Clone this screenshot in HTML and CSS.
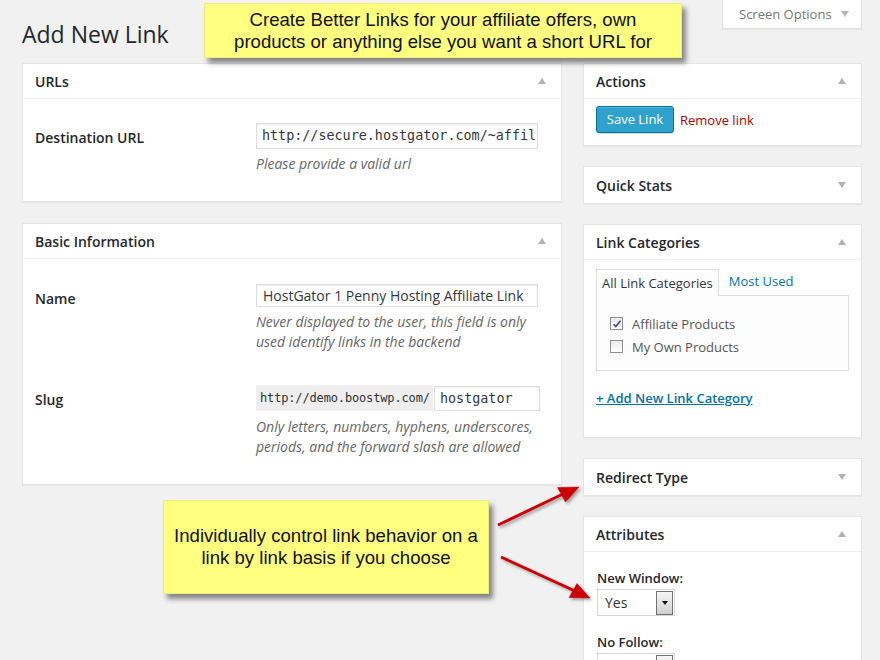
FILE: index.html
```html
<!DOCTYPE html>
<html lang="en">
<head>
<meta charset="utf-8">
<title>Add New Link</title>
<link rel="stylesheet" href="styles.css">
</head>
<body>
<div class="wrap">
  <header class="page-head">
    <h1 class="page-title">Add New Link</h1>
    <div class="screen-options">Screen Options <span class="tri tri-down"></span></div>
  </header>

  <div class="columns">
    <div class="main-col">
      <section class="postbox box-urls">
        <h3 class="hndle">URLs <span class="tri tri-up"></span></h3>
        <div class="inside inside-urls">
          <div class="field-row">
            <label class="field-label">Destination URL</label>
            <div class="field">
              <div class="text-input mono-input h26">http://secure.hostgator.com/~affil</div>
              <p class="description url-desc">Please provide a valid url</p>
            </div>
          </div>
        </div>
      </section>

      <section class="postbox box-basic">
        <h3 class="hndle">Basic Information <span class="tri tri-up"></span></h3>
        <div class="inside inside-basic">
          <div class="field-row">
            <label class="field-label">Name</label>
            <div class="field">
              <div class="text-input name-input h23">HostGator 1 Penny Hosting Affiliate Link</div>
              <p class="description name-desc">Never displayed to the user, this field is only used identify links in the backend</p>
            </div>
          </div>
          <div class="field-row slug-row">
            <label class="field-label">Slug</label>
            <div class="field">
              <div class="slug-line">
                <span class="slug-prefix">http://demo.boostwp.com/</span>
                <span class="text-input slug-input">hostgator</span>
              </div>
              <p class="description slug-desc">Only letters, numbers, hyphens, underscores, periods, and the forward slash are allowed</p>
            </div>
          </div>
        </div>
      </section>
    </div>

    <div class="side-col">
      <section class="postbox">
        <h3 class="hndle">Actions <span class="tri tri-up"></span></h3>
        <div class="inside inside-actions">
          <span class="button-primary">Save Link</span>
          <a class="remove-link">Remove link</a>
        </div>
      </section>

      <section class="postbox closed">
        <h3 class="hndle">Quick Stats <span class="tri tri-down"></span></h3>
      </section>

      <section class="postbox">
        <h3 class="hndle">Link Categories <span class="tri tri-up"></span></h3>
        <div class="inside inside-cats">
          <div class="tabs">
            <span class="tab active">All Link Categories</span>
            <span class="tab">Most Used</span>
          </div>
          <div class="tab-panel">
            <div class="cat-item"><span class="checkbox checked"><svg viewBox="0 0 12 12" width="12" height="12"><path d="M2.5 6.2 L4.8 8.6 L9.5 2.8" fill="none" stroke="#3b4a9a" stroke-width="1.6"/></svg></span>Affiliate Products</div>
            <div class="cat-item"><span class="checkbox"></span>My Own Products</div>
          </div>
          <a class="add-cat">+ Add New Link Category</a>
        </div>
      </section>

      <section class="postbox closed">
        <h3 class="hndle">Redirect Type <span class="tri tri-down"></span></h3>
      </section>

      <section class="postbox">
        <h3 class="hndle">Attributes <span class="tri tri-up"></span></h3>
        <div class="inside inside-attrs">
          <div class="attr-label">New Window:</div>
          <div class="fake-select"><span class="sel-text">Yes</span><span class="sel-btn"><span class="sel-tri"></span></span></div>
          <div class="attr-label attr-gap">No Follow:</div>
          <div class="fake-select"><span class="sel-text"></span><span class="sel-btn"><span class="sel-tri"></span></span></div>
        </div>
      </section>
    </div>
  </div>
</div>

<div class="callout callout-top">Create Better Links for your affiliate offers, own<br>products or anything else you want a short URL for</div>
<div class="callout callout-mid">Individually control link behavior on a<br>link by link basis if you choose</div>

<svg class="arrows" width="880" height="660" viewBox="0 0 880 660">
  <g fill="#cc0000" stroke="#cc0000">
    <line x1="498" y1="525" x2="565" y2="493" stroke-width="3"/>
    <polygon points="579,487 565.5,502 557.5,487.5" stroke-width="0.5"/>
    <line x1="501" y1="557" x2="575" y2="591" stroke-width="3"/>
    <polygon points="590,598 569,597.5 577,583.5" stroke-width="0.5"/>
  </g>
</svg>
</body>
</html>
```

FILE: styles.css
```css
* { box-sizing: border-box; }

html, body {
  margin: 0;
  padding: 0;
}

body {
  width: 880px;
  height: 660px;
  overflow: hidden;
  background: #f1f1f1;
  font-family: "Open Sans", "Liberation Sans", sans-serif;
  font-size: 13px;
  color: #444;
  position: relative;
}

.wrap {
  padding: 0 18px 0 22px;
}

.page-head {
  height: 63px;
  display: flex;
  justify-content: space-between;
  align-items: flex-start;
}

.page-title {
  margin: 0;
  padding-top: 20px;
  font-size: 23px;
  line-height: 29px;
  font-weight: 400;
  color: #23282d;
}

.screen-options {
  width: 140px;
  height: 29px;
  background: #fff;
  border: 1px solid #e1e1e1;
  border-top: none;
  box-shadow: 0 1px 1px rgba(0,0,0,.04);
  display: flex;
  align-items: center;
  padding-left: 16px;
  color: #72777c;
  font-size: 13px;
}

.screen-options .tri-down {
  margin-left: 9px;
  border-top-color: #b4b9be;
}

.tri {
  display: inline-block;
  width: 0;
  height: 0;
  border-left: 4.5px solid transparent;
  border-right: 4.5px solid transparent;
}

.tri-up { border-bottom: 6px solid #b0b3b6; }
.tri-down { border-top: 6px solid #b0b3b6; }

.columns {
  display: grid;
  grid-template-columns: 540px 279px;
  column-gap: 21px;
  align-items: start;
}

.postbox {
  background: #fff;
  border: 1px solid #e5e5e5;
  box-shadow: 0 1px 1px rgba(0,0,0,.04);
  margin-bottom: 20px;
}

.main-col .postbox { margin-bottom: 21px; }

.hndle {
  margin: 0;
  height: 35px;
  border-bottom: 1px solid #eee;
  display: flex;
  align-items: center;
  justify-content: space-between;
  padding: 0 15px 0 12px;
  font-size: 14px;
  font-weight: 600;
  color: #23282d;
}

.postbox.closed .hndle {
  border-bottom: none;
  height: 36px;
}

.inside {
  padding: 0 12px;
}

.inside-urls {
  padding-top: 24px;
  padding-bottom: 27px;
}

.inside-basic {
  padding-top: 25px;
  padding-bottom: 27px;
}

.field-row {
  display: grid;
  grid-template-columns: 221px 1fr;
}

.slug-row { margin-top: 33px; }

.field-label {
  padding-top: 5px;
  line-height: 20px;
  font-size: 14px;
  font-weight: 600;
  color: #23282d;
}

.text-input {
  display: block;
  width: 282px;
  background: #fff;
  border: 1px solid #ddd;
  box-shadow: inset 0 1px 2px rgba(0,0,0,.07);
  color: #32373c;
  white-space: nowrap;
  overflow: hidden;
}

.h26 { height: 26px; line-height: 24px; }
.h23 { height: 23px; line-height: 21px; }

.mono-input {
  font-family: "DejaVu Sans Mono", "Liberation Mono", monospace;
  font-size: 13.4px;
  padding-left: 5px;
}

.name-input {
  font-size: 14px;
  padding-left: 6px;
}

.description {
  margin: 4px 0 0;
  font-size: 14px;
  line-height: 20px;
  font-style: italic;
  color: #666;
  width: 284px;
}

.url-desc { margin-top: 5px; }

.name-desc { margin-top: 5px; }

.slug-desc { margin-top: 6px; width: 292px; }

.slug-line {
  display: flex;
  align-items: flex-start;
}

.slug-prefix {
  display: block;
  height: 26px;
  line-height: 27px;
  width: 177px;
  background: #eee;
  color: #333;
  font-family: "DejaVu Sans Mono", "Liberation Mono", monospace;
  font-size: 12px;
  padding-left: 4px;
  letter-spacing: -0.15px;
}

.slug-input {
  width: 106px;
  height: 25px;
  line-height: 23px;
  margin-left: 1px;
  margin-top: 1px;
  font-family: "DejaVu Sans Mono", "Liberation Mono", monospace;
  font-size: 13.4px;
  padding-left: 5px;
}

.inside-actions {
  padding: 7px 12px 12px;
  display: flex;
  align-items: center;
}

.button-primary {
  display: inline-block;
  width: 78px;
  height: 27px;
  line-height: 25px;
  text-align: center;
  background: #2ea2cc;
  border: 1px solid #0074a2;
  border-radius: 3px;
  box-shadow: inset 0 1px 0 rgba(120,200,230,.5), 0 1px 0 rgba(0,0,0,.15);
  color: #fff;
  font-size: 13px;
}

.remove-link {
  margin-left: 6px;
  color: #a00;
  font-size: 13px;
}

.inside-cats {
  padding: 8px 12px 29px;
}

.tabs {
  display: flex;
  align-items: flex-end;
}

.tab {
  height: 27px;
  line-height: 26px;
  padding: 0 5px;
  color: #0073aa;
  font-size: 13px;
}

.tab.active {
  color: #32373c;
  background: #fdfdfd;
  border: 1px solid #ddd;
  border-bottom: none;
  position: relative;
  top: 1px;
  margin-right: 5px;
}

.tab-panel {
  border: 1px solid #ddd;
  background: #fdfdfd;
  padding: 16px 13px 12px;
}

.cat-item {
  display: flex;
  align-items: center;
  height: 23px;
  color: #555;
  font-size: 13px;
}

.checkbox {
  display: block;
  width: 13px;
  height: 13px;
  margin-right: 9px;
  border: 1px solid #8f8f8f;
  background: linear-gradient(#e9e9e9, #fff);
}

.checkbox svg { display: block; margin: -0.5px; }

.add-cat {
  display: block;
  margin-top: 17px;
  line-height: 20px;
  font-size: 13px;
  font-weight: 600;
  color: #0073aa;
  text-decoration: underline;
}

.inside-attrs {
  padding: 16px 13px 20px;
}

.attr-label {
  font-size: 13px;
  font-weight: 600;
  line-height: 20px;
  color: #23282d;
}

.attr-gap { margin-top: 16px; }

.fake-select {
  margin-top: 1px;
  width: 78px;
  height: 27px;
  border: 1px solid #d7d7d7;
  background: #fff;
  display: flex;
  align-items: center;
  justify-content: space-between;
  padding: 0 1px 0 7px;
}

.sel-text {
  font-size: 14px;
  color: #333;
}

.sel-btn {
  width: 17px;
  height: 24px;
  border: 1px solid #707070;
  background: linear-gradient(#f6f6f6, #d0d0d0);
  display: flex;
  align-items: center;
  justify-content: center;
}

.sel-tri {
  width: 0;
  height: 0;
  border-left: 3.5px solid transparent;
  border-right: 3.5px solid transparent;
  border-top: 4px solid #000;
}

.callout {
  position: absolute;
  background: #ffff80;
  border: 1px solid #ecec80;
  box-shadow: 4px 5px 5px rgba(0,0,0,.45);
  font-family: "Liberation Sans", Arial, sans-serif;
  font-size: 18.6px;
  color: #111;
  text-align: center;
  display: flex;
  align-items: center;
  justify-content: center;
}

.callout-top {
  left: 204px;
  top: 3px;
  width: 478px;
  height: 55px;
  line-height: 22px;
}

.callout-mid {
  left: 163px;
  top: 500px;
  width: 326px;
  height: 94px;
  line-height: 22px;
}

.arrows {
  position: absolute;
  left: 0;
  top: 0;
  pointer-events: none;
  filter: drop-shadow(2px 2px 1.5px rgba(0,0,0,.35));
}
```
